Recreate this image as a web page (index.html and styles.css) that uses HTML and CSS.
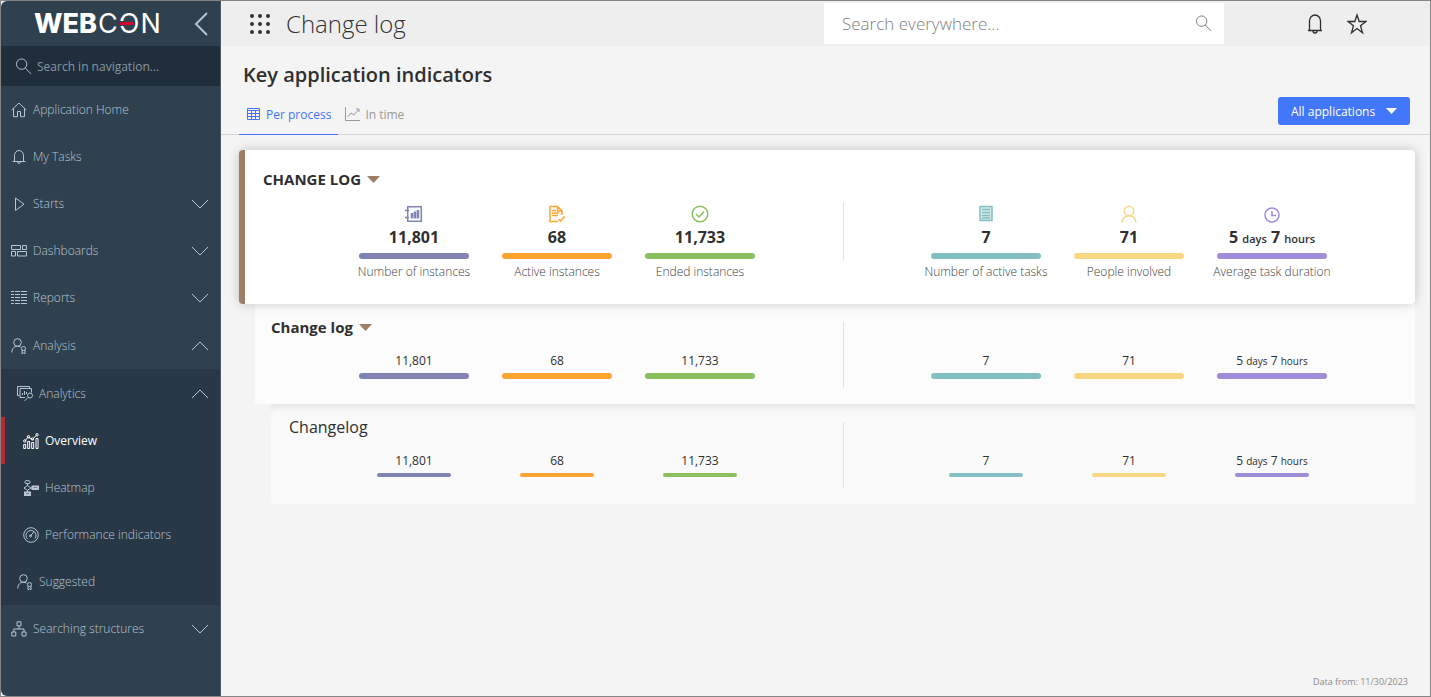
FILE: index.html
```html
<!DOCTYPE html>
<html lang="en">
<head>
<meta charset="utf-8">
<title>Change log</title>
<link rel="stylesheet" href="styles.css">
</head>
<body>
<svg class="sprite" aria-hidden="true">
  <symbol id="search" viewBox="0 0 18 18"><circle cx="7" cy="6.5" r="5.5"/><path d="M10.7 10.5L17 16.8"/></symbol>
  <symbol id="down" viewBox="0 0 18 10"><path d="M1 1l8 8 8-8"/></symbol>
  <symbol id="up" viewBox="0 0 18 10"><path d="M1 9l8-8 8 8"/></symbol>
  <symbol id="bell" viewBox="0 0 16 16"><path d="M1.500 12.500h13M3.500 12.500V6.500a4.500 5 0 0 1 9 0v6M6.500 12.800a1.500 1.500 0 0 0 3 0"/></symbol>
  <symbol id="person" viewBox="0 0 16 16"><circle cx="6.500" cy="4.500" r="3.800"/><path d="M.7 14.500C1 10.500 3 8.300 6.500 8.300c1.200 0 2.200.3 3 .8"/><circle cx="12.500" cy="10.500" r="2"/><path d="M11 12v3.700l1.500-.9 1.500.9V12"/></symbol>
  <symbol id="caret" viewBox="0 0 13 7"><path d="M0 0h13L6.500 7z"/></symbol>
</svg>
<div class="app">
  <aside class="sidebar">
    <div class="brand">
      <div class="logo" aria-label="WEBCON"><b>WEB</b><span>C</span><span>O</span><span>N</span><i class="logo-bar"></i></div>
      <button class="collapse" aria-label="Collapse navigation"><svg class="line" viewBox="0 0 14 24"><path d="M13 1L2 12l11 11"/></svg></button>
    </div>
    <label class="nav-search"><svg class="line"><use href="#search"/></svg><input type="search" placeholder="Search in navigation..." aria-label="Search in navigation"></label>
    <nav>
      <ul class="menu">
        <li><a class="item" href="#"><svg class="line icon" viewBox="0 0 16 16"><path d="M.7 8L8 1l7.300 7M2.500 6.500v8.200h4V9.500h3v5.200h4V6.500"/></svg>Application Home</a></li>
        <li><a class="item" href="#"><svg class="line icon"><use href="#bell"/></svg>My Tasks</a></li>
        <li><a class="item" href="#"><svg class="line icon" viewBox="0 0 16 16"><path d="M4.500 2v12.500L13 8.200z"/></svg>Starts<svg class="line arrow"><use href="#down"/></svg></a></li>
        <li><a class="item" href="#"><svg class="line icon" viewBox="0 0 16 16"><path d="M.5 2.500h9v4h-9zM11.500 2.500h4v4h-4zM.5 8.500h4v4.500h-4zM6.500 8.500h9v4.500h-9z"/></svg>Dashboards<svg class="line arrow"><use href="#down"/></svg></a></li>
        <li><a class="item" href="#"><svg class="line icon" viewBox="0 0 16 16"><path stroke-dasharray="3 1 5 1 6" d="M0 1.500h16M0 4.500h16M0 7.500h16M0 10.500h16M0 13.500h16"/></svg>Reports<svg class="line arrow"><use href="#down"/></svg></a></li>
        <li class="open">
          <a class="item" href="#"><svg class="line icon"><use href="#person"/></svg>Analysis<svg class="line arrow"><use href="#up"/></svg></a>
          <ul class="submenu">
            <li class="open">
              <a class="item second" href="#"><svg class="line icon" viewBox="0 0 16 16"><path d="M2.500 9.500h-2v-9h12v2M8 11.500H3v-9h11.500v4"/><path d="M5.500 9V7M7.500 9V5M9.500 8V6"/><circle cx="13" cy="9.500" r="2.500"/><path d="M11 11.500L7.500 15"/></svg>Analytics<svg class="line arrow"><use href="#up"/></svg></a>
              <ul>
                <li><a class="item third active" href="#"><svg class="line icon" viewBox="0 0 16 16"><path d="M.7 15.500v-4h2v4zM4.700 15.500V8.500h2v7zM8.700 15.500v-6h2v6zM13 15.500v-10h2v10z"/><path d="M2.500 7.500L5 4l4.500 2.500L13 2.500"/><circle cx="1.800" cy="8" r="1.200"/><circle cx="5.500" cy="3.700" r="1.200"/><circle cx="9.500" cy="6" r="1.200"/><circle cx="14" cy="1.800" r="1.200"/></svg>Overview</a></li>
                <li><a class="item third" href="#"><svg class="line icon" viewBox="0 0 16 16"><rect x="2" y=".7" width="5" height="2.800" rx="1"/><path d="M4.500 3.500v2M1 8l3.500-2.500L8 8l-3.500 2.300zM4.500 10v2M8 8h1"/><path stroke-width="2" d="M2 12.500h5V15H2zM9.500 6.500H15V9H9.500z"/></svg>Heatmap</a></li>
                <li><a class="item third" href="#"><svg class="line icon" viewBox="0 0 16 16"><circle cx="8" cy="8" r="7.300"/><path d="M4.500 12A5 5 0 1 1 12 11.500M7.500 9L11 4.500"/><circle cx="7.500" cy="9" r="1"/></svg>Performance indicators</a></li>
              </ul>
            </li>
            <li><a class="item second" href="#"><svg class="line icon"><use href="#person"/></svg>Suggested</a></li>
          </ul>
        </li>
        <li><a class="item" href="#"><svg class="line icon" viewBox="0 0 16 16"><path d="M6 .8h4v4H6zM.8 11h4v4h-4zM11 11h4v4h-4zM8 5v3M2.800 11V8H13v3"/></svg>Searching structures<svg class="line arrow"><use href="#down"/></svg></a></li>
      </ul>
    </nav>
  </aside>
  <div class="page">
    <header class="topbar">
      <button class="plain" aria-label="Applications"><svg class="dots" viewBox="0 0 20 20"><g><circle cx="2" cy="2" r="2"/><circle cx="10" cy="2" r="2"/><circle cx="18" cy="2" r="2"/><circle cx="2" cy="10" r="2"/><circle cx="10" cy="10" r="2"/><circle cx="18" cy="10" r="2"/><circle cx="2" cy="18" r="2"/><circle cx="10" cy="18" r="2"/><circle cx="18" cy="18" r="2"/></g></svg></button>
      <div class="app-name">Change log</div>
      <label class="global-search"><input type="search" placeholder="Search everywhere..." aria-label="Search everywhere"><svg class="line"><use href="#search"/></svg></label>
      <div class="actions">
        <button class="plain" aria-label="Notifications"><svg class="line action" viewBox="0 0 20 22"><path d="M3 17.500h14M4.500 17.500V8a5.500 6 0 0 1 11 0v9.500M8 18a2 2 0 0 0 4 0"/></svg></button>
        <button class="plain" aria-label="Favourites"><svg class="line action" viewBox="0 0 20 22"><path d="M10 2l2.200 6.500H19l-5.500 4.200 2 7L10 15.500l-5.500 4.200 2-7L1 8.500h6.800z"/></svg></button>
      </div>
    </header>
    <main>
      <div class="heading">
        <div>
          <h1>Key application indicators</h1>
          <div class="tabs" role="tablist">
            <button class="tab selected" role="tab" aria-selected="true"><svg class="line" viewBox="0 0 16 14"><path d="M1.500 1.500h12v11h-12zM1.500 3.500h12M1.500 6.500h12M1.500 9.500h12M5.500 3.500v9M9.500 3.500v9"/></svg>Per process</button>
            <button class="tab" role="tab" aria-selected="false"><svg class="line" viewBox="0 0 16 14"><path d="M.5 0v13.500H15M2.500 10L6 6l3 2 5-6M11 2h3v3"/></svg>In time</button>
          </div>
        </div>
        <label class="filter"><select aria-label="Applications filter"><option>All applications</option></select><svg viewBox="0 0 13 7"><path d="M0 0h13L6.500 7z"/></svg></label>
      </div>
      <div class="cards">
        <section class="card primary">
          <h2>CHANGE LOG<svg class="caret" viewBox="0 0 13 7"><path d="M0 0h13L6.500 7z"/></svg></h2>
          <div class="metrics">
            <div class="metric violet"><svg class="line kind" viewBox="0 0 18 18"><path d="M2.700 1.700h13.600v14.600H2.700zM0 5.500h4M0 12.500h4"/><path stroke-width="2.500" d="M7 13.500V8M10 13.500V6.500M13 13.500V5"/></svg><strong>11,801</strong><i></i><span>Number of instances</span></div>
            <div class="metric orange"><svg class="line kind" viewBox="0 0 18 18"><path d="M10 16.500H2v-15h7.500L14 6v4M9.500 1.500V6H14M4 5.500h4M4 8h7M4 10.500h6M10.500 14l2 2.200 4-5"/></svg><strong>68</strong><i></i><span>Active instances</span></div>
            <div class="metric green"><svg class="line kind" viewBox="0 0 18 18"><circle cx="9" cy="9" r="7.800"/><path d="M5 9l3 3 5-5.500"/></svg><strong>11,733</strong><i></i><span>Ended instances</span></div>
            <div class="divider"></div>
            <div class="metric teal"><svg class="line kind" viewBox="0 0 18 18"><path fill="#d3e8ea" d="M3 1.500h12v14H3z"/><path d="M5 4.500h8M5 7.500h8M5 10.500h8M5 13h8"/></svg><strong>7</strong><i></i><span>Number of active tasks</span></div>
            <div class="metric yellow"><svg class="line kind" viewBox="0 0 18 18"><circle cx="9" cy="6" r="4.700"/><path d="M2 17.500c.3-4 3-6.800 7-6.800s6.700 2.800 7 6.800"/></svg><strong>71</strong><i></i><span>People involved</span></div>
            <div class="metric purple"><svg class="line kind" viewBox="0 0 18 18"><circle cx="9" cy="10" r="7"/><path d="M9 6v4.500h4"/></svg><strong>5 <small>days</small> 7 <small>hours</small></strong><i></i><span>Average task duration</span></div>
          </div>
        </section>
        <section class="card process">
          <h2>Change log<svg class="caret" viewBox="0 0 13 7"><path d="M0 0h13L6.500 7z"/></svg></h2>
          <div class="metrics">
            <div class="metric violet"><strong>11,801</strong><i></i></div>
            <div class="metric orange"><strong>68</strong><i></i></div>
            <div class="metric green"><strong>11,733</strong><i></i></div>
            <div class="divider"></div>
            <div class="metric teal"><strong>7</strong><i></i></div>
            <div class="metric yellow"><strong>71</strong><i></i></div>
            <div class="metric purple"><strong>5 <small>days</small> 7 <small>hours</small></strong><i></i></div>
          </div>
        </section>
        <section class="card workflow">
          <h2>Changelog</h2>
          <div class="metrics">
            <div class="metric violet"><strong>11,801</strong><i></i></div>
            <div class="metric orange"><strong>68</strong><i></i></div>
            <div class="metric green"><strong>11,733</strong><i></i></div>
            <div class="divider"></div>
            <div class="metric teal"><strong>7</strong><i></i></div>
            <div class="metric yellow"><strong>71</strong><i></i></div>
            <div class="metric purple"><strong>5 <small>days</small> 7 <small>hours</small></strong><i></i></div>
          </div>
        </section>
      </div>
    </main>
    <footer>Data from: 11/30/2023</footer>
  </div>
</div>
</body>
</html>
```
FILE: styles.css
```css
* { box-sizing: border-box; }
body {
  margin: 0;
  font-family: "Open Sans", "Noto Sans", sans-serif;
  font-size: 12px;
  color: #2f2f2f;
}
.sprite { position: absolute; width: 0; height: 0; }
.line { fill: none; stroke: currentColor; stroke-width: 1; }
button, input, select { font: inherit; color: inherit; border: 0; background: none; padding: 0; outline: 0; }
ul { list-style: none; margin: 0; padding: 0; }

.app {
  display: flex;
  min-height: 100vh;
  border: 1px solid #858585;
  background: #f4f4f4;
}

/* Sidebar */
.sidebar {
  flex: 0 0 220px;
  background: #2f404f;
  border-right: 1px solid #4a5a68;
  border-radius: 6px 0 0 6px;
  color: #b8c5d3;
}
.brand {
  display: flex;
  justify-content: space-between;
  align-items: center;
  height: 45px;
  padding: 0 12px 0 33px;
}
.logo {
  position: relative;
  display: flex;
  gap: 1px;
  font: 400 27px/45px Inter, sans-serif;
  color: #fff;
}
.logo b { font-weight: 800; }
.logo-bar {
  position: absolute;
  left: 86px;
  top: 21px;
  width: 14px;
  height: 3px;
  background: #d5002f;
  box-shadow: 0 0 0 1px #2f404f;
}
.collapse { display: flex; }
.collapse svg { width: 14px; height: 24px; stroke-width: 2; }
.nav-search {
  display: flex;
  align-items: center;
  gap: 5px;
  height: 40px;
  padding: 0 14px;
  background: #1f2e3a;
}
.nav-search svg { flex: none; width: 17px; height: 17px; }
.nav-search input { flex: 1; min-width: 0; font-size: 12px; }
.nav-search input::placeholder { color: #8796a3; }
.item {
  display: flex;
  align-items: center;
  gap: 6px;
  height: 47px;
  padding: 0 11px 0 10px;
  color: inherit;
  font-size: 12px;
  font-weight: 300;
  text-decoration: none;
}
.second { padding-left: 16px; }
.third { padding-left: 22px; }
.active {
  color: #fff;
  border-left: 4px solid #b42a37;
  padding-left: 18px;
  font-weight: 400;
}
.icon { flex: none; width: 16px; height: 16px; }
.arrow { width: 18px; height: 10px; margin-left: auto; }
.open { padding-top: 1px; }
.submenu { background: #293846; }

/* Top bar */
.page { flex: 1; min-width: 0; display: flex; flex-direction: column; }
.topbar {
  display: flex;
  align-items: center;
  height: 45px;
  padding: 0 63px 0 29px;
  background: #eee;
}
.plain { display: flex; }
.dots { width: 20px; height: 20px; fill: #333; }
.app-name { margin-left: 16px; font-size: 24px; line-height: 30px; font-weight: 300; color: #333; }
.global-search {
  display: flex;
  align-items: center;
  width: 400px;
  height: 41px;
  margin-left: auto;
  padding: 0 12px 0 18px;
  background: #fff;
}
.global-search input { flex: 1; min-width: 0; font-size: 17px; font-weight: 300; }
.global-search input::placeholder { color: #808080; }
.global-search svg { width: 17px; height: 17px; color: #777; }
.actions { display: flex; gap: 22px; margin-left: 81px; }
.action { width: 20px; height: 22px; stroke-width: 1.3; }

/* Page heading */
.heading {
  display: flex;
  justify-content: space-between;
  align-items: flex-end;
  padding: 16px 20px 0 18px;
  border-bottom: 1px solid #d4d4d4;
}
h1 { margin: 0 0 6px 4px; font-size: 20px; line-height: 26px; font-weight: 600; }
.tabs { display: flex; }
.tab {
  display: flex;
  align-items: center;
  gap: 4px;
  height: 41px;
  margin-bottom: -1px;
  padding: 0 7px;
  border-bottom: 1px solid transparent;
  color: #999;
  font-size: 12px;
}
.tab svg { width: 16px; height: 14px; }
.selected { color: #4374f8; border-color: #4374f8; }
.filter { position: relative; margin-bottom: 9px; color: #fff; }
.filter select {
  display: block;
  appearance: none;
  width: 132px;
  height: 28px;
  padding-left: 13px;
  border-radius: 3px;
  background: #4377f9;
  font-size: 12px;
  font-weight: 500;
}
.filter svg {
  position: absolute;
  right: 13px;
  top: 11px;
  width: 11px;
  height: 6px;
  fill: #fff;
  pointer-events: none;
}

/* Cards */
.cards { padding: 15px 15px 0 18px; }
.card { position: relative; display: grid; }
.card h2 {
  grid-area: 1 / 1;
  align-self: start;
  display: flex;
  align-items: center;
  gap: 6px;
  margin: 0;
  font-size: 15px;
  line-height: 20px;
  font-weight: 700;
}
.caret { width: 13px; height: 7px; fill: #9e7e65; }
.metrics {
  grid-area: 1 / 1;
  display: grid;
  grid-template-columns: minmax(0, 1fr) repeat(7, minmax(0, 2fr)) minmax(0, 1fr);
}
.metric { display: flex; flex-direction: column; align-items: center; white-space: nowrap; }
.metric:first-child { grid-column-start: 2; }
.metric strong { font-size: 12px; line-height: 18px; font-weight: 400; }
.metric small { font-size: 10px; line-height: 1; }
.metric i { width: 110px; height: 6px; border-radius: 3px; background: var(--tone); }
.metric span { margin-top: 4px; line-height: 18px; font-weight: 300; color: #444; }
.kind { width: 18px; height: 18px; stroke-width: 1.5; color: var(--tone); }
.divider { justify-self: center; width: 1px; height: 66px; background: #e2e2e2; }
.violet { --tone: #8183b5; }
.orange { --tone: #ffa333; }
.green { --tone: #89bf5c; }
.teal { --tone: #84bfc4; }
.yellow { --tone: #f7d783; }
.purple { --tone: #a08dd8; }

.primary {
  z-index: 2;
  padding: 19px 0 23px 18px;
  border-left: 6px solid #9e7e65;
  border-radius: 4px;
  background: #fff;
  box-shadow: 0 0 12px rgba(0, 0, 0, .2);
}
.primary .metrics { padding: 33px 0 0 8px; }
.primary .kind { margin-top: 3px; }
.primary strong { margin: 5px 0 7px; font-size: 16px; font-weight: 700; }
.primary small { font-size: 11px; font-weight: 600; }
.primary .divider { height: 58px; }

.process {
  z-index: 1;
  margin-left: 16px;
  padding: 13px 0 16px 16px;
  background: #fcfcfc;
}
.process .metrics { padding-top: 5px; }
.process .metric { padding-top: 30px; }
.process strong { margin-bottom: 3px; font-weight: 500; }

.workflow {
  margin-left: 32px;
  padding: 13px 0 16px;
  border-radius: 3px;
  background: #fafafa;
  box-shadow: inset 0 8px 8px -6px rgba(0, 0, 0, .12);
}
.workflow h2 { padding-left: 18px; font-size: 16px; font-weight: 400; }
.workflow .metrics { padding-top: 5px; }
.workflow .metric { padding-top: 30px; }
.workflow strong { margin-bottom: 3px; }
.workflow .metric i { width: 74px; height: 4px; }

footer {
  margin-top: auto;
  padding: 0 22px 7px;
  text-align: right;
  font-size: 9px;
  line-height: 14px;
  color: #8b8b8b;
}
```
